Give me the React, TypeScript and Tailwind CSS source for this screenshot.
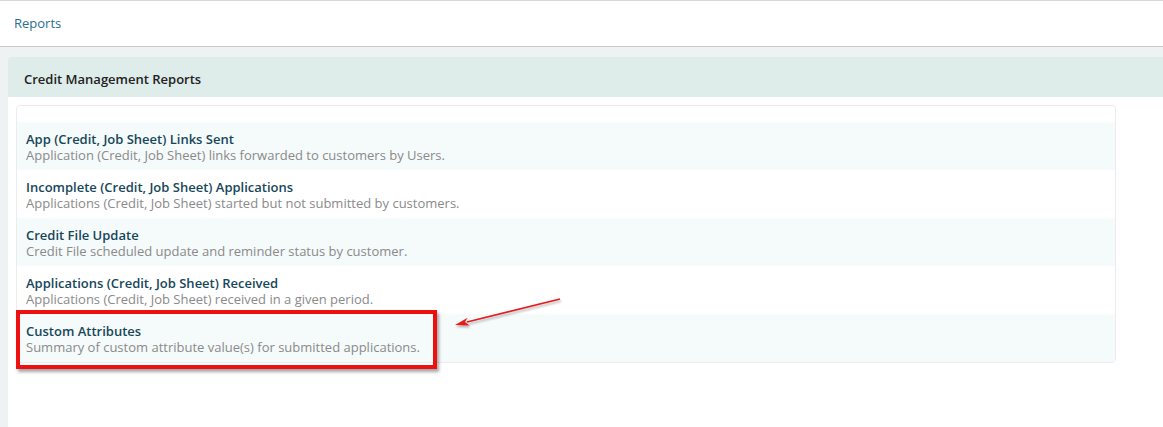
import React from "react";

const reports = [
  {
    title: "App (Credit, Job Sheet) Links Sent",
    desc: "Application (Credit, Job Sheet) links forwarded to customers by Users.",
  },
  {
    title: "Incomplete (Credit, Job Sheet) Applications",
    desc: "Applications (Credit, Job Sheet) started but not submitted by customers.",
  },
  {
    title: "Credit File Update",
    desc: "Credit File scheduled update and reminder status by customer.",
  },
  {
    title: "Applications (Credit, Job Sheet) Received",
    desc: "Applications (Credit, Job Sheet) received in a given period.",
  },
  {
    title: "Custom Attributes",
    desc: "Summary of custom attribute value(s) for submitted applications.",
    marked: true,
  },
];

export default function App() {
  return (
    <div className="h-[427px] w-[1163px] overflow-hidden bg-[#eef2f2] font-['Open_Sans',sans-serif] text-[13px]">
      <div className="h-[47px] border-t border-b border-t-[#d6d6d6] border-b-[#c9cccc] bg-white px-[14px] flex items-center">
        <a className="text-[#2c6e8f] text-[13px]">Reports</a>
      </div>

      <div className="ml-2 mt-[10px]">
        <div className="h-[40px] rounded-tl bg-[#deecea] flex items-center px-4 pt-[6px] text-[13px] font-semibold text-[#222]">
          Credit Management Reports
        </div>

        <div className="h-[330px] bg-white pt-2 pl-2">
          <div className="relative w-[1100px] rounded border border-[#ececec] pt-4">
            {reports.map((r, i) => (
              <div
                key={r.title}
                className={`relative h-12 px-[9px] pt-[9px] leading-4 ${
                  i % 2 === 0 ? "bg-[#f5fafa]" : "bg-white"
                }`}
              >
                <div className="font-semibold text-[#17475a]">{r.title}</div>
                <div className="text-[#8a8a8a]">{r.desc}</div>
                {r.marked && (
                  <div className="absolute left-[-1px] top-[-4px] h-[59px] w-[421px] border-4 border-[#ee0f0f] shadow-[2px_3px_3px_rgba(0,0,0,0.35)]" />
                )}
              </div>
            ))}

            <svg
              className="absolute left-[430px] top-[185px]"
              width="130"
              height="45"
              viewBox="0 0 130 45"
            >
              <defs>
                <filter id="sh" x="-20%" y="-50%" width="140%" height="200%">
                  <feDropShadow dx="1" dy="2" stdDeviation="1" floodColor="#000" floodOpacity="0.3" />
                </filter>
              </defs>
              <g filter="url(#sh)">
                <line x1="113" y1="8" x2="20" y2="31" stroke="#e61c1c" strokeWidth="1.8" />
                <polygon points="8,34 22.6,34.5 18,31 20.6,26.7" fill="#e61c1c" />
              </g>
            </svg>
          </div>
        </div>
      </div>
    </div>
  );
}
